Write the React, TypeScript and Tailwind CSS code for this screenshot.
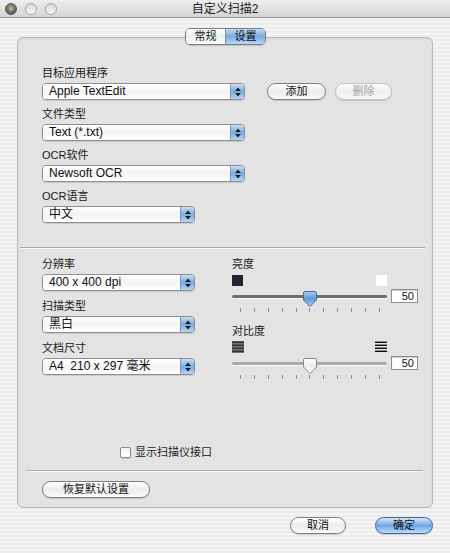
import React from "react";

const font = "font-['Liberation_Sans','Noto_Sans_CJK_SC',sans-serif]";

function Arrows() {
  return (
    <svg width="6" height="10" viewBox="0 0 6 10">
      <path d="M3 0.5 L5.8 4 H0.2 Z" fill="#1a1a1a" />
      <path d="M3 9.5 L5.8 6 H0.2 Z" fill="#1a1a1a" />
    </svg>
  );
}

function Popup({ value, width }: { value: string; width: string }) {
  return (
    <div
      className={`${width} h-[17px] flex rounded-[4px] border border-[#8e8e8e] overflow-hidden shadow-[0_1px_1px_rgba(0,0,0,0.12)]`}
    >
      <div className="flex-1 pl-[6px] text-[12px] leading-[15px] text-[#111] whitespace-pre bg-linear-to-b from-[#ffffff] via-[#f4f4f4] to-[#ffffff]">
        {value}
      </div>
      <div className="w-[14px] flex items-center justify-center border-l border-[#7c98bd] bg-linear-to-b from-[#c6dcf4] via-[#79a9de] to-[#b4d6f8]">
        <Arrows />
      </div>
    </div>
  );
}

function AquaButton({
  label,
  width,
  disabled,
  primary,
}: {
  label: string;
  width: string;
  disabled?: boolean;
  primary?: boolean;
}) {
  const look = primary
    ? "border-[#3f6591] bg-linear-to-b from-[#d5e8fc] via-[#6fa6e3] to-[#b9dcfd] text-[#111]"
    : disabled
      ? "border-[#c2c2c2] bg-linear-to-b from-[#fbfbfb] via-[#f0f0f0] to-[#f8f8f8] text-[#a3a3a3]"
      : "border-[#7d7d7d] bg-linear-to-b from-[#ffffff] via-[#ececec] to-[#fafafa] text-[#111]";
  return (
    <div
      className={`${width} h-[17px] rounded-full border ${look} flex items-center justify-center text-[11px] leading-none shadow-[0_1px_1px_rgba(0,0,0,0.15)]`}
    >
      {label}
    </div>
  );
}

function Slider({ active }: { active?: boolean }) {
  return (
    <div className="flex flex-col">
      <div className="flex items-center">
        <div className="relative w-[155px] h-[18px]">
          <div
            className={`absolute left-0 right-0 top-[8px] h-[3px] rounded-full ${
              active ? "bg-[#6d6d6d]" : "bg-[#a9a9a9]"
            } shadow-[0_1px_0_rgba(255,255,255,0.8)]`}
          />
          <svg
            className="absolute left-[71px] top-[4px]"
            width="14"
            height="16"
            viewBox="0 0 14 16"
          >
            <defs>
              <linearGradient id={active ? "tb" : "tw"} x1="0" y1="0" x2="0" y2="1">
                {active ? (
                  <>
                    <stop offset="0" stopColor="#a9cdf2" />
                    <stop offset="0.5" stopColor="#5e97d6" />
                    <stop offset="1" stopColor="#b3d6f7" />
                  </>
                ) : (
                  <>
                    <stop offset="0" stopColor="#ffffff" />
                    <stop offset="0.5" stopColor="#ececec" />
                    <stop offset="1" stopColor="#ffffff" />
                  </>
                )}
              </linearGradient>
            </defs>
            <path
              d="M2 0.5 H12 Q13.5 0.5 13.5 2 V9 L7 15.5 L0.5 9 V2 Q0.5 0.5 2 0.5 Z"
              fill={`url(#${active ? "tb" : "tw"})`}
              stroke={active ? "#4a6f9a" : "#888"}
            />
          </svg>
        </div>
        <div className="ml-[4px] w-[27px] h-[14px] border border-[#8d8d8d] bg-white text-[11px] leading-[12px] text-right pr-[3px] text-[#111] shadow-[inset_0_1px_1px_rgba(0,0,0,0.2)]">
          50
        </div>
      </div>
      <div className="ml-[8px] w-[140px] mt-[3px] flex justify-between">
        {Array.from({ length: 11 }).map((_, i) => (
          <div key={i} className="w-[1px] h-[4px] bg-[#8f8f8f]" />
        ))}
      </div>
    </div>
  );
}

function Lines({ strong }: { strong?: boolean }) {
  return (
    <svg width="12" height="12" viewBox="0 0 12 12">
      {strong ? (
        <>
          <rect x="0" y="0" width="12" height="12" fill="#fff" />
          {[0.5, 3.5, 6.5, 9.5].map((y) => (
            <rect key={y} x="0" y={y} width="12" height="1.6" fill="#111" />
          ))}
        </>
      ) : (
        <>
          <rect x="0" y="0" width="12" height="12" fill="#7a7a7a" />
          {[0.5, 3.5, 6.5, 9.5].map((y) => (
            <rect key={y} x="0" y={y} width="12" height="1.6" fill="#333" />
          ))}
        </>
      )}
    </svg>
  );
}

function Label({ text }: { text: string }) {
  return <div className="h-[16px] text-[11px] leading-[16px] text-[#1a1a1a]">{text}</div>;
}

export default function App() {
  return (
    <div
      className={`${font} w-[450px] h-[553px] flex flex-col bg-[repeating-linear-gradient(0deg,#ececec_0px,#ececec_2px,#f4f4f4_2px,#f4f4f4_4px)] overflow-hidden`}
    >
      <div className="relative h-[18px] border-b border-[#9a9a9a] bg-linear-to-b from-[#eeeeee] to-[#d4d4d4] flex items-center justify-center">
        <div className="absolute left-[5px] top-[3px] flex gap-[8px]">
          <div className="w-[12px] h-[12px] rounded-full border border-[#555] bg-[radial-gradient(circle_at_50%_35%,#9b9b9b,#4a4a4a)] flex items-center justify-center">
            <div className="w-[4px] h-[4px] rounded-full bg-[#c8a46a]" />
          </div>
          <div className="w-[12px] h-[12px] rounded-full border border-[#a8a8a8] bg-linear-to-b from-[#d8d8d8] to-[#f8f8f8]" />
          <div className="w-[12px] h-[12px] rounded-full border border-[#a8a8a8] bg-linear-to-b from-[#d8d8d8] to-[#f8f8f8]" />
        </div>
        <span className="text-[12px] text-[#222]">自定义扫描2</span>
      </div>

      <div className="relative flex-1 flex flex-col px-[17px]">
        <div className="mt-[19px] h-[471px] rounded-[6px] border border-[#b9b9b9] bg-[#e3e3e3] flex flex-col shadow-[inset_0_1px_2px_rgba(0,0,0,0.08)]">
          <div className="pl-[24px] pt-[27px] flex flex-col">
            <Label text="目标应用程序" />
            <div className="mt-[2px] flex items-center">
              <Popup value="Apple TextEdit" width="w-[203px]" />
              <div className="ml-[22px]">
                <AquaButton label="添加" width="w-[59px]" />
              </div>
              <div className="ml-[9px]">
                <AquaButton label="删除" width="w-[57px]" disabled />
              </div>
            </div>
            <div className="mt-[6px]">
              <Label text="文件类型" />
            </div>
            <div className="mt-[2px]">
              <Popup value="Text (*.txt)" width="w-[203px]" />
            </div>
            <div className="mt-[6px]">
              <Label text="OCR软件" />
            </div>
            <div className="mt-[2px]">
              <Popup value="Newsoft OCR" width="w-[203px]" />
            </div>
            <div className="mt-[6px]">
              <Label text="OCR语言" />
            </div>
            <div className="mt-[2px]">
              <Popup value="中文" width="w-[153px]" />
            </div>
          </div>

          <div className="mt-[24px] ml-[2px] mr-[7px] h-[1px] bg-[#a8a8a8] shadow-[0_1px_0_#f6f6f6]" />

          <div className="pl-[24px] pt-[8px] flex gap-[37px]">
            <div className="flex flex-col w-[153px]">
              <Label text="分辨率" />
              <div className="mt-[2px]">
                <Popup value="400 x 400 dpi" width="w-[153px]" />
              </div>
              <div className="mt-[7px]">
                <Label text="扫描类型" />
              </div>
              <div className="mt-[2px]">
                <Popup value="黑白" width="w-[153px]" />
              </div>
              <div className="mt-[7px]">
                <Label text="文档尺寸" />
              </div>
              <div className="mt-[2px]">
                <Popup value="A4  210 x 297 毫米" width="w-[153px]" />
              </div>
            </div>

            <div className="flex flex-col">
              <Label text="亮度" />
              <div className="mt-[3px] w-[155px] flex justify-between">
                <div className="w-[11px] h-[11px] bg-[#262230]" />
                <div className="w-[11px] h-[11px] bg-white" />
              </div>
              <div className="mt-[1px]">
                <Slider active />
              </div>
              <div className="mt-[11px]">
                <Label text="对比度" />
              </div>
              <div className="mt-[2px] w-[155px] flex justify-between">
                <Lines />
                <Lines strong />
              </div>
              <div className="mt-[1px]">
                <Slider />
              </div>
            </div>
          </div>

          <div className="mt-auto flex items-center pl-[102px]">
            <div className="w-[11px] h-[11px] rounded-[2px] border border-[#8a8a8a] bg-linear-to-b from-[#f2f2f2] to-white shadow-[0_1px_1px_rgba(0,0,0,0.15)]" />
            <span className="ml-[4px] text-[11px] leading-[12px] text-[#1a1a1a]">显示扫描仪接口</span>
          </div>
          <div className="mt-[12px] mx-[9px] h-[1px] bg-[#a8a8a8] shadow-[0_1px_0_#f6f6f6]" />
          <div className="mt-[10px] mb-[9px] pl-[24px]">
            <AquaButton label="恢复默认设置" width="w-[108px]" />
          </div>
        </div>

        <div className="absolute left-[185px] top-[10px] h-[17px] flex rounded-[5px] border border-[#7d7d7d] overflow-hidden shadow-[0_1px_1px_rgba(0,0,0,0.15)]">
          <div className="w-[39px] flex items-center justify-center text-[11px] text-[#111] bg-linear-to-b from-white via-[#efefef] to-white">
            常规
          </div>
          <div className="w-[40px] flex items-center justify-center text-[11px] text-[#111] border-l border-[#6f8fb8] bg-linear-to-b from-[#c3dbf5] via-[#7cabe0] to-[#b7d8f8]">
            设置
          </div>
        </div>

        <div className="mt-[9px] flex justify-end">
          <AquaButton label="取消" width="w-[56px]" />
          <div className="ml-[29px]">
            <AquaButton label="确定" width="w-[58px]" primary />
          </div>
        </div>
      </div>
    </div>
  );
}
